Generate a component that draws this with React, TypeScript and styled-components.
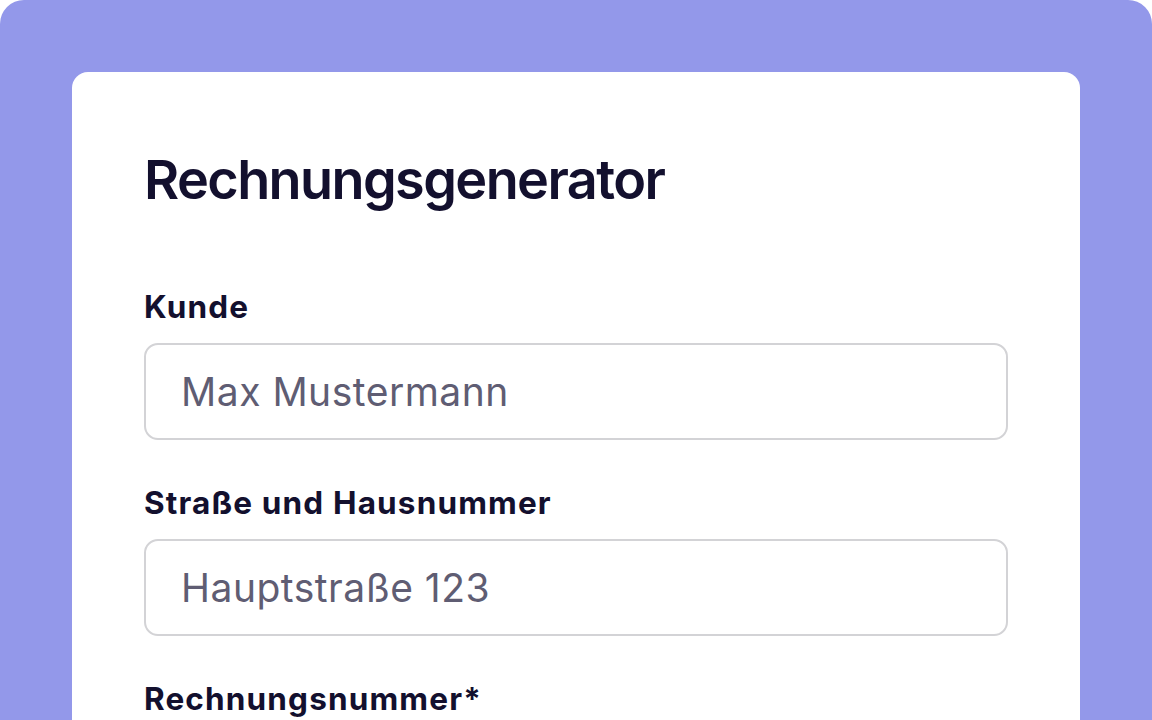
import React from "react";
import styled, { createGlobalStyle } from "styled-components";

const Global = createGlobalStyle`
  html, body {
    margin: 0;
    padding: 0;
    background: #ffffff;
    overflow: hidden;
  }
  body {
    font-family: Inter, "Noto Sans", "Liberation Sans", sans-serif;
  }
  * { box-sizing: border-box; }
`;

const Frame = styled.div`
  background: #9398ea;
  border-radius: 24px 24px 0 0;
  padding: 72px 72px 0;
  min-height: 900px;
`;

const Card = styled.div`
  background: #ffffff;
  border-radius: 16px;
  padding: 72px 72px 72px;
  display: flex;
  flex-direction: column;
`;

const Title = styled.h1`
  margin: 0 0 73px;
  font-size: 54px;
  line-height: 72px;
  font-weight: 600;
  letter-spacing: -1.6px;
  color: #13102e;
`;

const Fields = styled.div`
  display: flex;
  flex-direction: column;
  gap: 45px;
`;

const Field = styled.label`
  display: flex;
  flex-direction: column;
  gap: 18px;
`;

const Label = styled.span`
  font-size: 31.5px;
  line-height: 36px;
  font-weight: 700;
  letter-spacing: 1.15px;
  color: #13102e;
`;

const Input = styled.input`
  height: 97px;
  width: 100%;
  border: 2px solid #d3d3d6;
  border-radius: 14px;
  padding: 0 35px;
  font-family: inherit;
  font-size: 39px;
  letter-spacing: 0.5px;
  color: #13102e;
  background: #ffffff;
  outline: none;
  &::placeholder {
    color: #5f5d73;
    opacity: 1;
  }
`;

const fields = [
  { label: "Kunde", placeholder: "Max Mustermann" },
  { label: "Straße und Hausnummer", placeholder: "Hauptstraße 123" },
  { label: "Rechnungsnummer*", placeholder: "RE-2024-001" },
];

export default function App() {
  return (
    <>
      <Global />
      <Frame>
        <Card>
          <Title>Rechnungsgenerator</Title>
          <Fields>
            {fields.map((f) => (
              <Field key={f.label}>
                <Label>{f.label}</Label>
                <Input placeholder={f.placeholder} />
              </Field>
            ))}
          </Fields>
        </Card>
      </Frame>
    </>
  );
}
